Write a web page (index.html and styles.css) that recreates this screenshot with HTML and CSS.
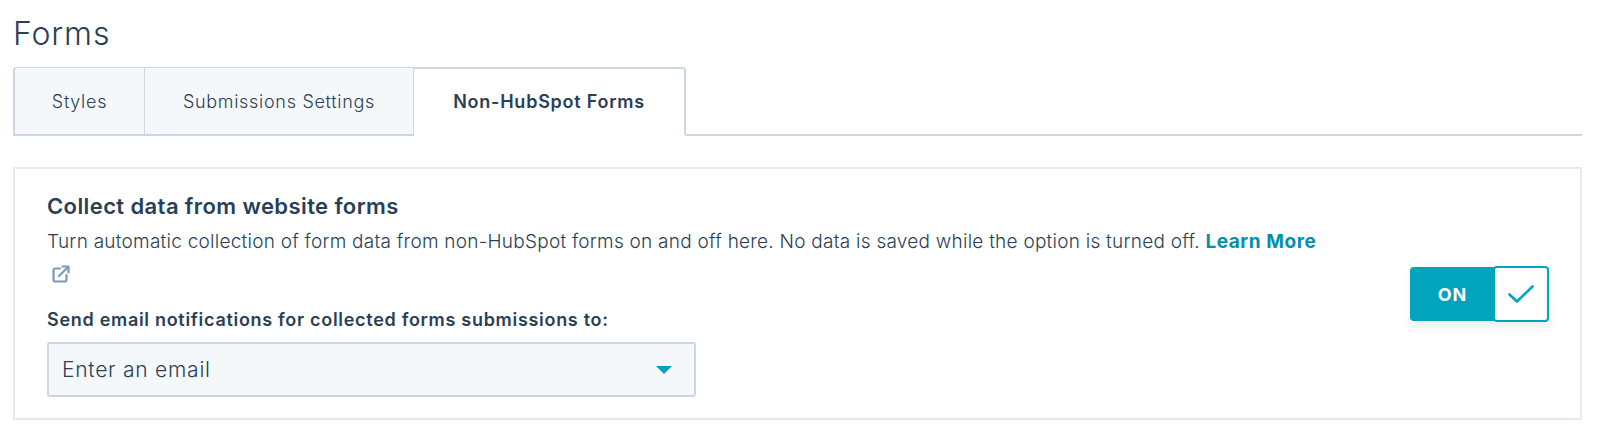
FILE: index.html
```html
<!doctype html>
<html lang="en">
<head>
	<meta charset="UTF-8">
	<title>Forms</title>
	<link rel="stylesheet" href="styles.css">
</head>
<body>
	<div class="container">
		<h1 class="title">Forms</h1>
		<div class="tabs">
			<div class="tab tab_styles">Styles</div>
			<div class="tab tab_settings">Submissions Settings</div>
			<div class="tab tab_active">Non-HubSpot Forms</div>
		</div>
		<div class="card">
			<div class="card_body">
				<h2 class="card_title">Collect data from website forms</h2>
				<p class="card_desc">Turn automatic collection of form data from non-HubSpot forms on and off here. No data is saved while the option is turned off. <a class="link" href="#">Learn More</a>
					<svg class="ext_icon" viewBox="0 0 18 18" width="18" height="18" fill="none" stroke="#7c98b6" stroke-width="2.2" stroke-linecap="round" stroke-linejoin="round">
						<path d="M8 3.5H3.5a2 2 0 0 0-2 2v9a2 2 0 0 0 2 2h9a2 2 0 0 0 2-2V10"/>
						<path d="M7 11 16 2"/>
						<path d="M10.5 1.5h6v6"/>
					</svg>
				</p>
				<label class="field_label">Send email notifications for collected forms submissions to:</label>
				<div class="select">
					<span>Enter an email</span>
					<i class="caret"></i>
				</div>
			</div>
			<div class="toggle">
				<div class="toggle_on">ON</div>
				<div class="toggle_knob">
					<svg viewBox="0 0 26 18" width="26" height="18" fill="none" stroke="#00a4bd" stroke-width="2.6" stroke-linecap="round" stroke-linejoin="round">
						<path d="M1.5 9.5 9 16.5 24.5 1.5"/>
					</svg>
				</div>
			</div>
		</div>
	</div>
</body>
</html>
```

FILE: styles.css
```css
*,*::before,*::after{box-sizing:border-box;}
html,body,h1,h2,p{
	margin:0;padding:0;
}
body{
	font-family:"Inter","Noto Sans",sans-serif;
	color:#2a3f56;
	background:#fff;
}
.container{
	padding:14px 18px 0 13px;
}
.title{
	font-size:32px;
	font-weight:300;
	letter-spacing:.9px;
	line-height:40px;
	margin-bottom:13px;
}
.tabs{
	display:flex;
	height:69px;
	border-bottom:2px solid #cbd6e2;
}
.tab{
	display:flex;
	align-items:center;
	justify-content:center;
	height:69px;
	font-size:18px;
	font-weight:300;
	letter-spacing:.7px;
	background:#f5f8fa;
	border:1px solid #cbd6e2;
	border-bottom:2px solid #cbd6e2;
	border-left:0;
}
.tab_styles{
	width:132px;
	border-left:2px solid #cbd6e2;
	border-radius:3px 0 0 0;
}
.tab_settings{
	width:269px;
}
.tab_active{
	width:272px;
	font-weight:600;
	letter-spacing:.75px;
	background:#fff;
	border-bottom-color:#fff;
	border-top:2px solid #cbd6e2;
	border-right:2px solid #cbd6e2;
	border-radius:0 3px 0 0;
}
.card{
	display:flex;
	justify-content:space-between;
	height:253px;
	margin-top:31px;
	padding:23px 31px 0 32px;
	border:2px solid #e5e9f0;
}
.card_body{
	width:1285px;
}
.card_title{
	font-size:22px;
	font-weight:600;
	letter-spacing:.4px;
	line-height:28px;
	margin-bottom:6px;
}
.card_desc{
	font-size:19px;
	font-weight:300;
	letter-spacing:.25px;
	line-height:32px;
	margin-bottom:18px;
}
.link{
	color:#0091ae;
	font-weight:700;
	letter-spacing:.55px;
	text-decoration:none;
}
.ext_icon{
	margin-left:5px;
	vertical-align:-3px;
}
.field_label{
	display:block;
	font-size:18px;
	font-weight:600;
	letter-spacing:.7px;
	line-height:24px;
	margin-bottom:10px;
}
.select{
	display:flex;
	align-items:center;
	justify-content:space-between;
	width:649px;
	height:55px;
	padding:0 22px 0 13px;
	font-size:21px;
	font-weight:300;
	letter-spacing:.75px;
	background:#f5f8fa;
	border:2px solid #cbd6e2;
	border-radius:3px;
}
.caret{
	width:0;
	height:0;
	border-left:8px solid transparent;
	border-right:8px solid transparent;
	border-top:8px solid #00a4bd;
}
.toggle{
	display:flex;
	align-items:center;
	width:139px;
	height:56px;
	margin-top:74px;
	border-radius:4px;
	box-shadow:0 6px 10px rgba(45,62,80,.08);
}
.toggle_on{
	display:flex;
	align-items:center;
	justify-content:center;
	width:85px;
	height:54px;
	font-size:18px;
	font-weight:700;
	letter-spacing:1px;
	color:#fff;
	background:#00a4bd;
	border-radius:4px 0 0 4px;
}
.toggle_knob{
	display:flex;
	align-items:center;
	justify-content:center;
	width:56px;
	height:56px;
	margin-left:-2px;
	background:#fff;
	border:2px solid #00a4bd;
	border-radius:4px;
}
```
